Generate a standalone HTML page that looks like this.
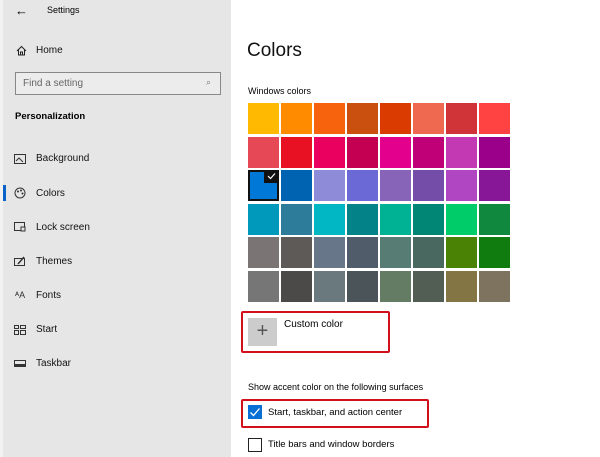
<!DOCTYPE html>
<html><head><style>
*{margin:0;padding:0;box-sizing:border-box}
body{width:600px;height:457px;overflow:hidden;background:#fff;font-family:"Liberation Sans",sans-serif;position:relative;color:#000}
.side{position:absolute;left:0;top:0;width:231px;height:457px;background:#e6e6e6;border-left:3px solid #f2f2f2}
.a{position:absolute;white-space:nowrap}
.nav{font-size:10px;color:#111}
.grid{position:absolute;left:248px;top:103px}
.c{position:absolute;width:31px;height:31px}
.red{position:absolute;border:2.5px solid #d2101c;border-radius:2px}
</style></head><body>
<div class="side">
<div class="a" style="left:12px;top:3px;font-size:13px">←</div>
<div class="a" style="left:44px;top:5px;font-size:9px">Settings</div>
<svg class="a" style="left:13px;top:45px" width="11" height="11" viewBox="0 0 11 11"><path d="M1 6L5.5 1.5L10 6M2.5 4.5V10H8.5V4.5M4.5 10V7H6.5V10" fill="none" stroke="#222" stroke-width="1"/></svg>
<div class="a nav" style="left:33px;top:45px">Home</div>
<div class="a" style="left:12px;top:72px;width:206px;height:23px;border:1px solid #888;background:#ececec"></div>
<div class="a" style="left:20px;top:78px;font-size:10px;color:#666">Find a setting</div>
<div class="a" style="left:203px;top:77px;font-size:9px;color:#777">⌕</div>
<div class="a" style="left:12px;top:111px;font-size:9.5px;font-weight:bold">Personalization</div>
<svg class="a" style="left:11px;top:154px" width="12" height="10"><rect x="0.5" y="0.5" width="11" height="9" fill="none" stroke="#333"/><path d="M2 7L5 4L9 8" fill="none" stroke="#333"/></svg>
<div class="a nav" style="left:33px;top:153px">Background</div>
<div class="a" style="left:0px;top:185px;width:3px;height:16px;background:#0a64c8"></div>
<svg class="a" style="left:11px;top:187px" width="12" height="12"><circle cx="6" cy="6" r="5" fill="none" stroke="#333"/><circle cx="4" cy="4.5" r="1" fill="#333"/><circle cx="7" cy="3.5" r="1" fill="#333"/><circle cx="8.5" cy="6.5" r="1" fill="#333"/></svg>
<div class="a nav" style="left:33px;top:188px">Colors</div>
<svg class="a" style="left:11px;top:222px" width="12" height="10"><rect x="0.5" y="0.5" width="10" height="8" fill="none" stroke="#333"/><rect x="7" y="5" width="4" height="4" fill="#e6e6e6" stroke="#333"/></svg>
<div class="a nav" style="left:33px;top:222px">Lock screen</div>
<svg class="a" style="left:11px;top:256px" width="12" height="11"><rect x="0.5" y="2.5" width="10" height="7" fill="none" stroke="#333"/><path d="M4 8L10 1" stroke="#333" stroke-width="1.5"/></svg>
<div class="a nav" style="left:33px;top:256px">Themes</div>
<div class="a" style="left:12px;top:290px;font-size:9px;color:#333">ᴬA</div>
<div class="a nav" style="left:33px;top:290px">Fonts</div>
<svg class="a" style="left:11px;top:325px" width="12" height="10"><rect x="0.5" y="0.5" width="4" height="3" fill="none" stroke="#333"/><rect x="6.5" y="0.5" width="5" height="3" fill="none" stroke="#333"/><rect x="0.5" y="5.5" width="4" height="4" fill="none" stroke="#333"/><rect x="6.5" y="5.5" width="5" height="4" fill="none" stroke="#333"/></svg>
<div class="a nav" style="left:33px;top:324px">Start</div>
<svg class="a" style="left:11px;top:360px" width="12" height="7"><rect x="0.5" y="0.5" width="11" height="6" fill="none" stroke="#333"/><rect x="1" y="4" width="10" height="2" fill="#333"/></svg>
<div class="a nav" style="left:33px;top:358px">Taskbar</div>
</div>

<div class="a" style="left:247px;top:40px;font-size:19px;color:#111">Colors</div>
<div class="a" style="left:248px;top:86px;font-size:9px">Windows colors</div>
<div class="grid" id="g"></div>

<div class="red" style="left:241px;top:311px;width:149px;height:42px"></div>
<div class="a" style="left:248px;top:318px;width:29px;height:28px;background:#cccccc;font-size:20px;color:#555;text-align:center;line-height:27px;font-weight:300">+</div>
<div class="a" style="left:284px;top:319px;font-size:10px">Custom color</div>

<div class="a" style="left:248px;top:382px;font-size:9px">Show accent color on the following surfaces</div>
<div class="red" style="left:241px;top:399px;width:188px;height:29px"></div>
<div class="a" style="left:248px;top:405px;width:14px;height:14px;background:#0a6fd4"></div>
<svg class="a" style="left:248px;top:405px" width="14" height="14"><path d="M2.5 7.5L5.5 10.5L11.5 3.5" fill="none" stroke="#fff" stroke-width="1.3"/></svg>
<div class="a" style="left:268px;top:407px;font-size:9.5px">Start, taskbar, and action center</div>
<div class="a" style="left:248px;top:438px;width:14px;height:14px;border:1.5px solid #222"></div>
<div class="a" style="left:268px;top:439px;font-size:9.5px">Title bars and window borders</div>

<script>
var cols=[
["#ffb900","#ff8c00","#f7630c","#ca5010","#da3b01","#ef6950","#d13438","#ff4343"],
["#e74856","#e81123","#ea005e","#c30052","#e3008c","#bf0077","#c239b3","#9a0089"],
["#0078d7","#0063b1","#8e8cd8","#6b69d6","#8764b8","#744da9","#b146c2","#881798"],
["#0099bc","#2d7d9a","#00b7c3","#038387","#00b294","#018574","#00cc6a","#10893e"],
["#7a7574","#5d5a58","#68768a","#515c6b","#567c73","#486860","#498205","#107c10"],
["#767676","#4c4a48","#69797e","#4a5459","#647c64","#525e54","#847545","#7e735f"]];
var g=document.getElementById('g'),h='';
for(var r=0;r<6;r++)for(var c=0;c<8;c++){
h+='<div class="c" style="left:'+(c*33)+'px;top:'+Math.round(r*33.6)+'px;background:'+cols[r][c]+'"></div>';}
h+='<div class="c" style="left:0;top:67px;background:#0078d7;border:2px solid #111"></div>';
h+='<div style="position:absolute;left:16px;top:67px;width:15px;height:13px;background:#111"></div>';
h+='<svg style="position:absolute;left:18px;top:68px" width="11" height="10"><path d="M2 5L4.5 7.5L9 2.5" fill="none" stroke="#fff" stroke-width="1.2"/></svg>';
g.innerHTML=h;
</script>
</body></html>
